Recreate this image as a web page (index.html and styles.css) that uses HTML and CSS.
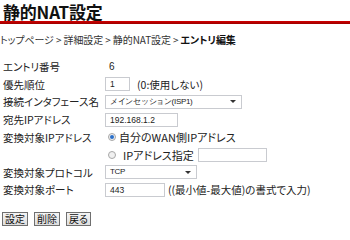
FILE: index.html
```html
<!DOCTYPE html>
<html lang="ja">
<head>
<meta charset="utf-8">
<link rel="stylesheet" href="styles.css">
</head>
<body>
<h1 class="title">静的NAT設定</h1>
<div class="rule"></div>
<p class="crumbs">トップページ &gt; 詳細設定 &gt; 静的NAT設定 &gt; <b>エントリ編集</b></p>
<div class="form">
  <div class="label">エントリ番号</div>
  <div class="value"><span class="num">6</span></div>

  <div class="label">優先順位</div>
  <div class="value"><span class="field w-prio">1</span><span class="note">(0:使用しない)</span></div>

  <div class="label">接続インタフェース名</div>
  <div class="value"><span class="select w-if"><span class="sel-text">メインセッション(ISP1)</span><span class="arrow"></span></span></div>

  <div class="label">宛先IPアドレス</div>
  <div class="value"><span class="field w-ip">192.168.1.2</span></div>

  <div class="label">変換対象IPアドレス</div>
  <div class="value"><span class="radio on"></span><span class="rtext">自分のWAN側IPアドレス</span></div>

  <div class="label"></div>
  <div class="value"><span class="radio"></span><span class="rtext spaced">IPアドレス指定</span><span class="field w-spec"></span></div>

  <div class="label">変換対象プロトコル</div>
  <div class="value"><span class="select w-proto"><span class="sel-text">TCP</span><span class="arrow"></span></span></div>

  <div class="label">変換対象ポート</div>
  <div class="value"><span class="field w-port">443</span><span class="note port-note">((最小値-最大値)の書式で入力)</span></div>
</div>
<div class="buttons">
  <span class="btn">設定</span>
  <span class="btn">削除</span>
  <span class="btn">戻る</span>
</div>
</body>
</html>
```
FILE: styles.css
```css
html, body {
  margin: 0;
  padding: 0;
  background: #ffffff;
}
body {
  width: 350px;
  height: 231px;
  overflow: hidden;
  color: #222;
  font-family: "Noto Sans CJK JP", "Noto Sans", sans-serif;
  font-feature-settings: "palt";
}
.title {
  margin: 0;
  padding: 3px 0 0 3px;
  height: 18px;
  font-size: 17px;
  line-height: 18px;
  font-weight: bold;
  color: #111;
  letter-spacing: -0.2px;
}
.rule {
  height: 3px;
  background: linear-gradient(#d40000, #9a0000);
}
.crumbs {
  margin: 9px 0 0 0;
  padding-left: 0;
  font-size: 10px;
  line-height: 14px;
  color: #333;
  white-space: nowrap;
  letter-spacing: -0.1px;
}
.crumbs b {
  font-weight: bold;
  color: #111;
}
.form {
  margin-top: 11px;
  padding-left: 3px;
  display: grid;
  grid-template-columns: 102px 1fr;
  grid-auto-rows: 17.6px;
  font-size: 10.5px;
}
.label, .value {
  display: flex;
  align-items: center;
  white-space: nowrap;
}
.num {
  padding-left: 4px;
  font-family: "Liberation Sans", sans-serif;
  font-size: 10px;
}
.field, .select {
  box-sizing: border-box;
  height: 14px;
  border: 1px solid #c9cbd0;
  background: #fff;
  font-family: "Liberation Sans", sans-serif;
  font-size: 8.5px;
  line-height: 12px;
  padding-left: 4px;
  color: #222;
  display: inline-flex;
  align-items: center;
}
.w-prio { width: 25px; }
.w-ip { width: 73px; }
.w-port { width: 60px; }
.w-spec { width: 69px; margin-left: 4px; }
.w-if { width: 137px; }
.w-proto { width: 92px; }
.select {
  justify-content: space-between;
  padding-right: 5px;
}
.sel-text {
  font-size: 8px;
  letter-spacing: -0.3px;
}
.arrow {
  width: 0;
  height: 0;
  border-left: 3px solid transparent;
  border-right: 3px solid transparent;
  border-top: 3px solid #333;
}
.note {
  margin-left: 7px;
}
.port-note {
  margin-left: 3px;
}
.radio {
  box-sizing: border-box;
  width: 8px;
  height: 8px;
  border-radius: 50%;
  border: 1px solid #a7a7a7;
  background: #f0f0f0;
  margin-left: 3px;
  margin-right: 3px;
  position: relative;
}
.radio.on::after {
  content: "";
  position: absolute;
  left: 1px;
  top: 1px;
  width: 4px;
  height: 4px;
  border-radius: 50%;
  background: #2a6fc9;
}
.rtext {
  font-size: 11px;
}
.rtext.spaced {
  margin-left: 4px;
}
.buttons {
  margin-top: 13px;
  padding-left: 2px;
  display: flex;
  gap: 6px;
}
.btn {
  box-sizing: border-box;
  height: 14px;
  padding: 0 2px;
  border: 1px solid #6f6f6f;
  background: linear-gradient(#f4f4f4, #dedede);
  font-size: 10px;
  line-height: 12px;
  color: #111;
  display: inline-flex;
  align-items: center;
}
```
